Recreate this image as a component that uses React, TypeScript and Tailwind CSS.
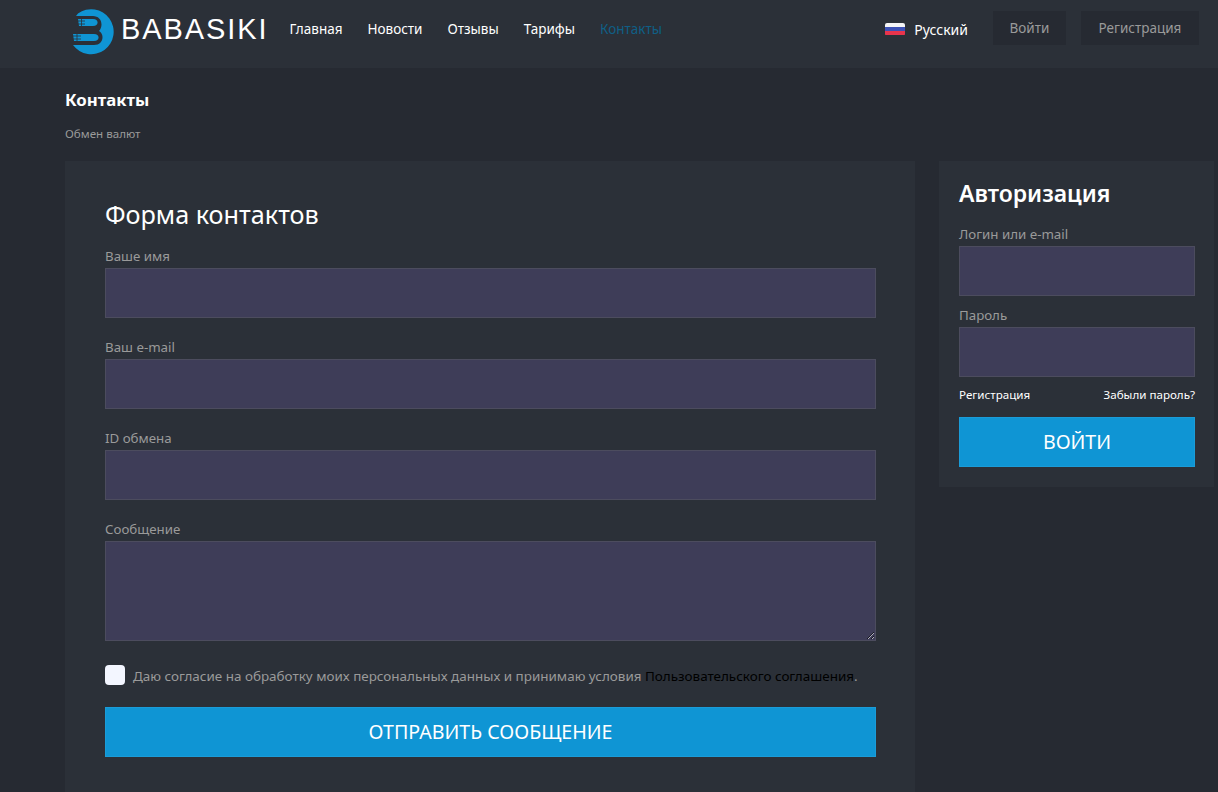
import React from "react";

function Logo() {
  const dark = "#2b3038";
  const blue = "#0f95d4";
  return (
    <svg width="52" height="54" viewBox="0 0 52 54" className="shrink-0 mt-[4px]">
      <path d="M10 9.5 A22.5 22.5 0 1 1 5 41 H26 C31.5 41 34.5 37.5 34.5 33 C34.5 30.5 33 28.2 31 27 C32.6 25.4 33.5 23 33.5 20.5 C33.5 15.5 30 12 25 12 H8 Z" fill={blue} />
      <path d="M10 15 H25 C28 15 29.5 16.5 29.5 18.5 C29.5 20.5 28 22 25 22 H11 Z" fill={blue} />
      <path d="M5 30 H26 C29 30 30.5 31.5 30.5 33.5 C30.5 35.5 29 37 26 37 H6 Z" fill={blue} />
      <path d="M9 17 H17 M9 20 H17 M4 32 H13 M4 35 H13" stroke={dark} strokeWidth="0.8" />
      <path d="M13.5 15 V22 M9 30 V37" stroke={dark} strokeWidth="0.8" />
    </svg>
  );
}

function Flag() {
  return (
    <div className="w-[20px] h-[13px] rounded-[2px] overflow-hidden flex flex-col shrink-0">
      <div className="flex-1 bg-[#f4f4f6]" />
      <div className="flex-1 bg-[#3c51b5]" />
      <div className="flex-1 bg-[#e8344c]" />
    </div>
  );
}

function Field({ label, textarea, className }: { label: string; textarea?: boolean; className?: string }) {
  return (
    <div className={className}>
      <div className="text-[13.3px] leading-[20px] text-[#9a9a9a] h-[22px]">{label}</div>
      {textarea ? (
        <textarea className="block w-full h-[100px] bg-[#3e3d58] border border-[#4c4c5e] outline-none" />
      ) : (
        <input className="block w-full h-[50px] bg-[#3e3d58] border border-[#4c4c5e] outline-none" />
      )}
    </div>
  );
}

export default function App() {
  const nav = ["Главная", "Новости", "Отзывы", "Тарифы"];
  return (
    <div className="h-[792px] overflow-hidden bg-[#262a32] font-['Noto_Sans','Inter',sans-serif]">
      <header className="h-[68px] bg-[#2b3038] flex items-center pl-[68px] pr-[19px] pb-[10px]">
        <div className="flex items-center">
          <Logo />
          <span className="ml-[1px] text-[29px] tracking-[1.9px] text-white font-['Liberation_Sans',sans-serif] leading-none">BABASIKI</span>
        </div>
        <nav className="flex items-center gap-[25px] ml-[21px] text-[13.5px] text-white">
          {nav.map((n) => (
            <a key={n}>{n}</a>
          ))}
          <a className="text-[#0f5f86]">Контакты</a>
        </nav>
        <div className="ml-auto flex items-center">
          <Flag />
          <span className="ml-[9px] text-[14px] text-white">Русский</span>
          <button className="ml-[25px] mb-[2px] h-[34px] w-[73px] bg-[#262a32] text-[13.5px] text-[#9a9a9a]">Войти</button>
          <button className="ml-[15px] mb-[2px] h-[34px] w-[118px] bg-[#262a32] text-[13.5px] text-[#9a9a9a]">Регистрация</button>
        </div>
      </header>

      <div className="pl-[65px] pr-[4px]">
        <h1 className="mt-[20px] text-[16.8px] leading-[24px] font-bold text-white">Контакты</h1>
        <div className="mt-[14px] text-[11.6px] leading-[16px] text-[#9a9a9a]">Обмен валют</div>

        <div className="mt-[19px] flex items-start gap-[24px]">
          <main className="w-[850px] h-[640px] bg-[#2b3038] pt-[35px] pl-[40px] pr-[39px]">
            <h2 className="text-[25.2px] leading-[36px] text-white">Форма контактов</h2>
            <Field label="Ваше имя" className="mt-[14px]" />
            <Field label="Ваш e-mail" className="mt-[19px]" />
            <Field label="ID обмена" className="mt-[19px]" />
            <Field label="Сообщение" textarea className="mt-[19px]" />
            <div className="mt-[23px] flex items-center h-[22px]">
              <span className="w-[20px] h-[20px] rounded-[4px] bg-[#f3f6ff] shrink-0" />
              <span className="ml-[8px] mt-[2px] text-[13.45px] text-[#9a9a9a] whitespace-nowrap">
                Даю согласие на обработку моих персональных данных и принимаю условия <span className="text-black">Пользовательского соглашения</span>.
              </span>
            </div>
            <button className="mt-[21px] w-full h-[50px] bg-[#0f95d4] border border-[#1a9cd8] text-white text-[19.6px] uppercase">Отправить сообщение</button>
          </main>

          <aside className="w-[275px] h-[326px] bg-[#2b3038] pt-[15px] pl-[20px] pr-[19px]">
            <h3 className="text-[23px] leading-[34px] font-semibold text-white">Авторизация</h3>
            <Field label="Логин или e-mail" className="mt-[14px]" />
            <Field label="Пароль" className="mt-[9px]" />
            <div className="mt-[11px] flex justify-between text-[11.6px] leading-[14px] text-white">
              <a>Регистрация</a>
              <a>Забыли пароль?</a>
            </div>
            <button className="mt-[15px] w-full h-[50px] bg-[#0f95d4] border border-[#1a9cd8] text-white text-[19.6px] uppercase">Войти</button>
          </aside>
        </div>
      </div>
    </div>
  );
}
